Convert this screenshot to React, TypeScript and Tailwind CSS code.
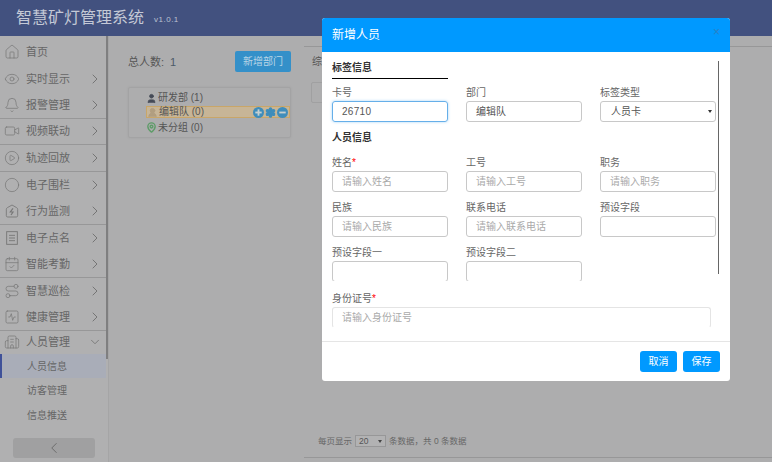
import { Bell, Building2, CalendarCheck, ChevronDown, ChevronLeft, ChevronRight, CirclePlay, Circle, Eye, House, MapPin, Route, Settings, SquareActivity, User, UserRound, Video } from 'lucide-react';

const BoltIcon = ({ size = 16, className = '' }: { size?: number; strokeWidth?: number; className?: string }) => (
  <svg width={size} height={size} viewBox="0 0 24 24" fill="none" stroke="currentColor" strokeWidth="1.3" className={className}>
    <path d="M12 3l7 4c1 .6 1.5 1.4 1.5 2.5V19a2 2 0 0 1-2 2h-13a2 2 0 0 1-2-2V9.500C3.500 8.400 4 7.600 5 7z" />
    <path d="M13.500 8l-4 5.500h4l-3 4.500" strokeWidth="1.800" />
  </svg>
);

const ListBoxIcon = ({ size = 16, className = '' }: { size?: number; strokeWidth?: number; className?: string }) => (
  <svg width={size} height={size} viewBox="0 0 24 24" fill="none" stroke="currentColor" strokeWidth="1.4" className={className}>
    <rect x="4" y="2.500" width="16" height="19" />
    <path d="M7.500 8h9M7.500 12h9M7.500 16h9" />
  </svg>
);

const TreeButton = ({ minus }: { minus?: boolean }) => (
  <svg width="11" height="11" viewBox="0 0 24 24">
    <circle cx="12" cy="12" r="12" fill="#3f8dbb" />
    <rect x="5" y="10" width="14" height="4" fill="#c7d0d0" />
    {!minus && <rect x="10" y="5" width="4" height="14" fill="#c7d0d0" />}
  </svg>
);

const navRows = [
  { label: '首页', icon: House },
  { label: '实时显示', icon: Eye, arrow: true },
  { label: '报警管理', icon: Bell, arrow: true, line: true },
  { label: '视频联动', icon: Video, arrow: true, line: true },
  { label: '轨迹回放', icon: CirclePlay, arrow: true, line: true },
  { label: '电子围栏', icon: Circle, arrow: true },
  { label: '行为监测', icon: BoltIcon, arrow: true, line: true },
  { label: '电子点名', icon: ListBoxIcon, arrow: true },
  { label: '智能考勤', icon: CalendarCheck, arrow: true, line: true },
  { label: '智慧巡检', icon: Route, arrow: true },
  { label: '健康管理', icon: SquareActivity, arrow: true, line: true },
];

const Field = ({ label, placeholder, value, required }: { label: string; placeholder?: string; value?: string; required?: boolean }) => (
  <div className="flex h-[45px] flex-col">
    <div className="h-[15px] text-[10px] leading-[14px] text-[#666]">
      {label}
      {required && <span className="text-[#f00]">*</span>}
    </div>
    <div className="flex h-[21px] shrink-0 items-center rounded-[3px] border border-[#c8c8c8] px-[9px] text-[10px] leading-[14px] text-[#aaa]">
      {value ? <span className="text-[#555]">{value}</span> : placeholder}
    </div>
  </div>
);

const App = () => {
  return (
    <div className="relative h-[462px] w-[772px] overflow-hidden bg-[#adadae] font-['Liberation_Sans','Noto_Sans_CJK_SC',sans-serif]">
      <header className="flex h-[36px] items-center bg-[#42517f] pl-[16px]">
        <span className="text-[16px] text-[#c4c9d6]">智慧矿灯管理系统</span>
        <span className="ml-[10px] mt-[3px] text-[8px] tracking-[0.5px] text-[#bcc2d2]">v1.0.1</span>
      </header>

      <div className="flex h-[426px]">
        <aside className="relative flex h-full w-[109px] shrink-0 border-r border-[#a5a5a6] bg-[#b0b0b1]">
          <div className="h-full w-[106px] overflow-hidden pt-[3px]">
            {navRows.map((row) => (
              <div key={row.label} className={`flex h-[26.5px] items-center pl-[4px] pr-[3px] text-[#666] ${row.line ? 'border-b border-[#979798]' : ''}`}>
                <row.icon size={16} strokeWidth={1.1} className="shrink-0 text-[#777]" />
                <span className="ml-[6px] flex-1 text-[11px] leading-[14px]">{row.label}</span>
                {row.arrow && <ChevronRight size={16} strokeWidth={1.2} className="text-[#666]" />}
              </div>
            ))}
            <div className="flex h-[23.5px] items-center pl-[4px] pr-[3px] text-[#666]">
              <Building2 size={16} strokeWidth={1.1} className="shrink-0 text-[#777]" />
              <span className="ml-[6px] flex-1 text-[11px] leading-[14px]">人员管理</span>
              <ChevronDown size={14} strokeWidth={1.2} className="mr-[1px] text-[#666]" />
            </div>
            <div className="flex h-[24px] items-center border-l-2 border-[#3f5199] bg-[#a9adb8] pl-[25px] text-[10px] text-[#666]">人员信息</div>
            <div className="flex h-[25px] items-center pl-[27px] text-[10px] text-[#666]">访客管理</div>
            <div className="flex h-[25px] items-center pl-[27px] text-[10px] text-[#666]">信息推送</div>
          </div>
          <div className="h-[323px] w-[2px] bg-[#7f7f80]" />
          <div className="absolute bottom-0 left-0 flex h-[24px] w-[108px] justify-center bg-[#b0b0b1]">
            <div className="flex h-[20px] w-[82px] items-center justify-center rounded-[3px] bg-[#a0a0a1]">
              <ChevronLeft size={18} strokeWidth={1.2} className="text-[#666]" />
            </div>
          </div>
        </aside>

        <main className="flex min-w-0 flex-1">
          <section className="w-[195px] shrink-0 pl-[19px] pr-[13px] pt-[15px]">
            <div className="flex h-[21px] items-center justify-between">
              <span className="flex items-center text-[11px] leading-[14px] text-[#555]">
                总人数:<span className="ml-[6px] text-[#4c5a68]">1</span>
              </span>
              <button className="flex h-[21px] w-[56px] items-center justify-center rounded-[2px] bg-[#3490c9] text-[10px] leading-[14px] text-[#b9d5e6]">新增部门</button>
            </div>
            <div className="mt-[15px] flex h-[51px] w-[163px] flex-col rounded-[2px] border border-[#a3a3a4] pl-[17px] pt-[2px] shadow-[0_0_2px_#a0a0a0]">
              <div className="flex h-[16px] items-center text-[10px] leading-[14px] text-[#555]">
                <User size={11} fill="#454a57" className="text-[#454a57]" />
                <span className="ml-[1px]">研发部 (1)</span>
              </div>
              <div className="flex h-[12px] items-center justify-between border border-[#c9a668] bg-[#c7b597] pr-[1px] text-[10px] leading-[10px] text-[#555]">
                <span className="flex items-center">
                  <UserRound size={11} fill="#b19e80" className="text-[#b19e80]" />
                  <span className="ml-[1px]">编辑队 (0)</span>
                </span>
                <span className="flex gap-[1px]">
                  <TreeButton />
                  <Settings size={11} strokeWidth={3} fill="#3f8dbb" className="text-[#3f8dbb]" />
                  <TreeButton minus />
                </span>
              </div>
              <div className="mt-[2px] flex h-[15px] items-center text-[10px] leading-[14px] text-[#555]">
                <MapPin size={11} strokeWidth={3} className="text-[#5e9c68]" />
                <span className="ml-[1px]">未分组 (0)</span>
              </div>
            </div>
          </section>

          <section className="flex min-w-0 flex-1 flex-col">
            <div className="mt-[10px] h-px shrink-0 bg-[#979798]" />
            <div className="ml-[8px] mt-[7px] h-[15px] shrink-0 text-[10px] leading-[15px] text-[#555]">综</div>
            <div className="ml-[7px] mt-[13px] h-[21px] w-[60px] shrink-0 rounded-[2px] border border-[#a0a0a1]" />
            <div className="flex flex-1 items-end pb-[10px] pl-[14px] text-[8.5px] leading-[12px] text-[#666]">
              <span>每页显示</span>
              <span className="mx-[3px] flex h-[12px] w-[31px] items-center justify-between border border-[#979798] bg-[#b2b2b3] px-[3px] text-[#555]">
                20<i className="border-x-[2px] border-t-[3px] border-x-transparent border-t-[#444]" />
              </span>
              <span>条数据，共 0 条数据</span>
            </div>
            <div className="mb-[4px] h-px shrink-0 bg-[#979798]" />
          </section>
        </main>
      </div>

      <div className="absolute left-[322px] top-[18px] flex h-[363px] w-[408px] flex-col overflow-hidden rounded-[3px] bg-white">
        <div className="relative flex h-[34px] shrink-0 items-center bg-[#0099ff] pl-[10px] text-[12px] leading-[16px] text-white">
          新增人员
          <span className="absolute right-[10px] top-[6px] text-[12px] leading-[16px] text-[#2a80c4]">×</span>
        </div>
        <div className="relative h-[229px] shrink-0 overflow-hidden pl-[10px] pt-[9px]">
          <div className="h-[18px] w-[116px] border-b border-black text-[10px] font-bold leading-[14px] text-[#333]">标签信息</div>
          <div className="mt-[7px] grid w-[384px] grid-cols-3 gap-x-[18px]">
            <div className="flex h-[45px] flex-col">
              <div className="h-[15px] text-[10px] leading-[14px] text-[#666]">卡号</div>
              <div className="flex h-[21px] shrink-0 items-center rounded-[3px] border border-[#66afe9] px-[9px] text-[10px] leading-[14px] tracking-[0.3px] text-[#555] shadow-[0_0_3px_#a8d4f5]">26710</div>
            </div>
            <Field label="部门" value="编辑队" />
            <div className="flex h-[45px] flex-col">
              <div className="h-[15px] text-[10px] leading-[14px] text-[#666]">标签类型</div>
              <div className="flex h-[21px] shrink-0 items-center justify-between rounded-[3px] border border-[#c8c8c8] pl-[10px] pr-[3px] text-[10px] leading-[14px] text-[#555]">
                人员卡
                <i className="border-x-[2px] border-t-[3px] border-x-transparent border-t-[#333]" />
              </div>
            </div>
          </div>
          <div className="h-[14px] text-[10px] font-bold leading-[14px] text-[#333]">人员信息</div>
          <div className="mt-[11px] grid w-[384px] grid-cols-3 gap-x-[18px]">
            <Field label="姓名" placeholder="请输入姓名" required />
            <Field label="工号" placeholder="请输入工号" />
            <Field label="职务" placeholder="请输入职务" />
            <Field label="民族" placeholder="请输入民族" />
            <Field label="联系电话" placeholder="请输入联系电话" />
            <Field label="预设字段" />
            <Field label="预设字段一" />
            <Field label="预设字段二" />
          </div>
          <div className="absolute right-[11px] top-[9px] h-[213px] w-[1px] bg-[#666]" />
        </div>
        <div className="ml-[10px] mt-[11px] h-[15px] shrink-0 text-[10px] leading-[14px] text-[#666]">
          身份证号<span className="text-[#f00]">*</span>
        </div>
        <div className="ml-[10px] flex h-[21px] w-[379px] shrink-0 items-center rounded-[3px] border border-[#e4e4e4] border-b-transparent px-[9px] text-[10px] leading-[14px] text-[#aaa]">请输入身份证号</div>
        <div className="mt-[13px] flex flex-1 items-start justify-end gap-[6px] border-t border-[#e5e5e5] pr-[10px] pt-[9px]">
          <button className="h-[21px] w-[37px] rounded-[3px] bg-[#0099ff] text-[10px] leading-[14px] text-white">取消</button>
          <button className="h-[21px] w-[37px] rounded-[3px] bg-[#0099ff] text-[10px] leading-[14px] text-white">保存</button>
        </div>
      </div>
    </div>
  );
};

export default App;
